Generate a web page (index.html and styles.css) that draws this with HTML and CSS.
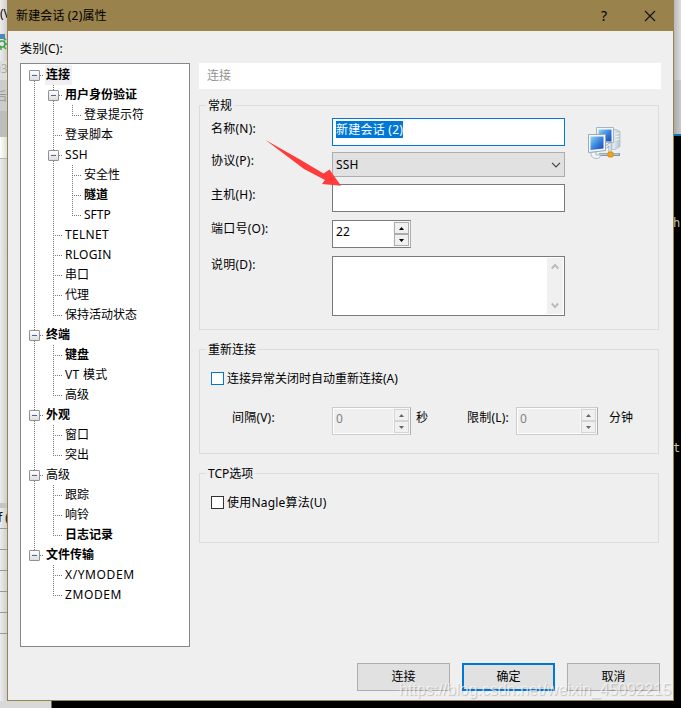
FILE: index.html
```html
<!DOCTYPE html>
<html lang="zh-CN">
<head>
<meta charset="utf-8">
<title>新建会话 (2)属性</title>
<link rel="stylesheet" href="styles.css">
</head>
<body>
<div class="desktop">
  <div class="behind-left">
    <div class="bl-menu">(V</div>
    <div class="bl-tool"><svg width="7" height="18" viewBox="0 0 7 18"><path d="M0 0h5v5H0z" fill="#4f86b8"/><circle cx="2" cy="10" r="3" fill="none" stroke="#3fa34d" stroke-width="1.6"/><path d="M4 6l2-1M5 10h2M4 13l2 2M1 13v3" stroke="#3fa34d" stroke-width="1.5"/></svg></div>
    <div class="bl-addr">03</div>
    <div class="bl-tab">后</div>
    <div class="bl-bar"></div>
    <div class="bl-list"></div>
    <div class="bl-pane"></div>
    <div class="bl-split"></div>
    <div class="bl-head">f (</div>
    <div class="bl-row"></div><div class="bl-row"></div><div class="bl-row"></div><div class="bl-row"></div><div class="bl-row"></div><div class="bl-row"></div>
  </div>

  <main class="dialog">
    <header class="titlebar">
      <h1>新建会话 (2)属性</h1>
      <span class="help">?</span>
      <svg class="close" width="12" height="12" viewBox="0 0 12 12"><path d="M1 1l10 10M11 1L1 11" stroke="#111" stroke-width="1.1" fill="none"/></svg>
    </header>
    <div class="content">
      <div class="category">
        <div class="category-label">类别(C):</div>
        <div class="tree">
          <div class="row"><i class="box first"></i><b class="sel">连接</b></div>
          <div class="row"><i class="v"></i><i class="box"></i><b>用户身份验证</b></div>
          <div class="row"><i class="v"></i><i class="v"></i><i class="l"></i><span>登录提示符</span></div>
          <div class="row"><i class="v"></i><i class="t"></i><span>登录脚本</span></div>
          <div class="row"><i class="v"></i><i class="box"></i><span class="latin">SSH</span></div>
          <div class="row"><i class="v"></i><i class="v"></i><i class="t"></i><span>安全性</span></div>
          <div class="row"><i class="v"></i><i class="v"></i><i class="t"></i><b>隧道</b></div>
          <div class="row"><i class="v"></i><i class="v"></i><i class="l"></i><span>SFTP</span></div>
          <div class="row"><i class="v"></i><i class="t"></i><span class="latin">TELNET</span></div>
          <div class="row"><i class="v"></i><i class="t"></i><span class="latin">RLOGIN</span></div>
          <div class="row"><i class="v"></i><i class="t"></i><span>串口</span></div>
          <div class="row"><i class="v"></i><i class="t"></i><span>代理</span></div>
          <div class="row"><i class="v"></i><i class="l"></i><span>保持活动状态</span></div>
          <div class="row"><i class="box"></i><b>终端</b></div>
          <div class="row"><i class="v"></i><i class="t"></i><b>键盘</b></div>
          <div class="row"><i class="v"></i><i class="t"></i><span class="latin">VT 模式</span></div>
          <div class="row"><i class="v"></i><i class="l"></i><span>高级</span></div>
          <div class="row"><i class="box"></i><b>外观</b></div>
          <div class="row"><i class="v"></i><i class="t"></i><span>窗口</span></div>
          <div class="row"><i class="v"></i><i class="l"></i><span>突出</span></div>
          <div class="row"><i class="box"></i><span>高级</span></div>
          <div class="row"><i class="v"></i><i class="t"></i><span>跟踪</span></div>
          <div class="row"><i class="v"></i><i class="t"></i><span>响铃</span></div>
          <div class="row"><i class="v"></i><i class="l"></i><b>日志记录</b></div>
          <div class="row"><i class="box last"></i><b>文件传输</b></div>
          <div class="row"><i></i><i class="t"></i><span class="modem">X/YMODEM</span></div>
          <div class="row"><i></i><i class="l"></i><span class="modem">ZMODEM</span></div>
        </div>
      </div>

      <div class="settings">
        <div class="banner">连接</div>

        <section class="group general">
          <h2>常规</h2>
          <div class="general-body">
            <div class="form">
              <label>名称(N):</label><div class="input focus"><mark>新建会话 (2)</mark></div>
              <label>协议(P):</label><div class="combo"><span>SSH</span><svg width="10" height="6" viewBox="0 0 10 6"><path d="M1 .8l4 4 4-4" fill="none" stroke="#444" stroke-width="1.2"/></svg></div>
              <label>主机(H):</label><div class="input"></div>
              <label>端口号(O):</label>
              <div class="spin"><span class="num">22</span><span class="arrows"><span><svg width="5" height="3" viewBox="0 0 5 3"><path d="M0 3L2.5 0 5 3z"/></svg></span><span><svg width="5" height="3" viewBox="0 0 5 3"><path d="M0 0l2.5 3L5 0z"/></svg></span></span></div>
              <label>说明(D):</label>
              <div class="textarea"><div class="scroll"><svg width="8" height="7" viewBox="0 0 8 7"><path d="M.7 5.5L4 2l3.3 3.5" fill="none" stroke="#bcbcbc" stroke-width="2"/></svg><svg width="8" height="7" viewBox="0 0 8 7"><path d="M.7 1.5L4 5l3.3-3.5" fill="none" stroke="#bcbcbc" stroke-width="2"/></svg></div></div>
            </div>
            <svg class="net-icon" width="34" height="34" viewBox="0 0 34 34">
              <defs>
                <linearGradient id="scr" x1="0" y1="0" x2="1" y2="1"><stop offset="0" stop-color="#8fd8f5"/><stop offset=".5" stop-color="#3d86df"/><stop offset="1" stop-color="#1746b8"/></linearGradient>
                <linearGradient id="tower" x1="0" y1="0" x2="1" y2="0"><stop offset="0" stop-color="#eef3f7"/><stop offset="1" stop-color="#b4c4d0"/></linearGradient>
              </defs>
              <path d="M25 4l4-.5 4 2v15l-5 3h-3z" fill="url(#tower)" stroke="#a9bac8" stroke-width=".7"/>
              <path d="M28.500 8l4-1M28.500 11l4-1M28.500 14l4-1" stroke="#fff" stroke-width=".8"/>
              <path d="M9.500 1.500h17v15h-17z" fill="#f3f7fa" stroke="#a3b4c2"/>
              <path d="M11.500 3.500h13v12h-13z" fill="url(#scr)"/>
              <path d="M19 21l4-3v10" fill="none" stroke="#96a9b8" stroke-width="3"/>
              <path d="M19 21l4-3v10" fill="none" stroke="#eef3f7" stroke-width="1.300"/>
              <path d="M12 28.500h21" stroke="#8197a8" stroke-width="3"/>
              <path d="M12 28.200h20" stroke="#d3dde5" stroke-width="1"/>
              <path d="M4 26h5v3h5c-1 3-3 3.500-5 3.500s-5-2-5-4z" fill="#f3f6f8" stroke="#a9bac8"/>
              <path d="M1.500 8.500h17v16l-17 2z" fill="#f5f9fb" stroke="#9aacbb"/>
              <path d="M3.500 10.500h13v12l-13 1.500z" fill="url(#scr)"/>
              <rect x="21" y="26" width="5" height="5" rx="1" fill="#f7a70c" stroke="#cf7d00" stroke-width=".7"/>
            </svg>
          </div>
        </section>

        <section class="group reconnect">
          <h2>重新连接</h2>
          <div class="check"><span class="cb hot"></span>连接异常关闭时自动重新连接(A)</div>
          <div class="limits">
            <label class="l-int">间隔(V):</label>
            <div class="spin off"><span class="num">0</span><span class="arrows"><span><svg width="5" height="3" viewBox="0 0 5 3"><path d="M0 3L2.5 0 5 3z"/></svg></span><span><svg width="5" height="3" viewBox="0 0 5 3"><path d="M0 0l2.5 3L5 0z"/></svg></span></span></div>
            <span class="u-sec">秒</span>
            <label class="l-lim">限制(L):</label>
            <div class="spin off wide"><span class="num">0</span><span class="arrows"><span><svg width="5" height="3" viewBox="0 0 5 3"><path d="M0 3L2.5 0 5 3z"/></svg></span><span><svg width="5" height="3" viewBox="0 0 5 3"><path d="M0 0l2.5 3L5 0z"/></svg></span></span></div>
            <span>分钟</span>
          </div>
        </section>

        <section class="group tcp">
          <h2>TCP选项</h2>
          <div class="check nagle"><span class="cb"></span>使用Nagle算法(U)</div>
        </section>
      </div>
    </div>
    <footer class="buttons">
      <button>连接</button><button class="default">确定</button><button>取消</button>
    </footer>
  </main>

  <div class="behind-right">
    <div class="br-top"></div><div class="br-bar"></div><div class="br-line"></div>
    <div class="br-term"><span>h</span><span>t</span></div>
  </div>
  <div class="behind-bottom"></div>
  <svg class="arrow" width="80" height="50" viewBox="0 0 80 50"><path d="M.5 0L35 19.500 58.500 33.500 64.500 29.500 76 45.700 57 44 60 40 39 29z" fill="#ff3b3b"/></svg>
  <div class="watermark">https://blog.csdn.net/weixin_45092215</div>
</div>
</body>
</html>
```
FILE: styles.css
```css
* { box-sizing: border-box; }
body { margin: 0; font: 12px/16px "Noto Sans", "Noto Sans CJK SC", sans-serif; color: #000; overflow: hidden; }
h1, h2 { margin: 0; font: inherit; }
svg { display: block; flex: none; }

.desktop { position: relative; width: 681px; height: 708px; overflow: hidden; display: grid; grid-template-columns: 7px 667px 7px; grid-template-rows: 701px 7px; }

/* strips of the windows behind the dialog */
.behind-left { background: linear-gradient(90deg, #ececec, #cfcfcf); overflow: hidden; white-space: nowrap; }
.behind-left > div { overflow: hidden; }
.bl-menu { height: 33px; padding-top: 6px; }
.bl-tool { height: 28px; padding-top: 1px; }
.bl-addr { height: 19px; color: #aaa; background: #ddd; text-indent: -6px; }
.bl-tab { height: 31px; padding-top: 9px; color: #999; background: #ccc; text-indent: -5px; }
.bl-bar { height: 26px; background: #bdbdbd; }
.bl-list { height: 22px; background: linear-gradient(90deg, #fff, #ddd); border-bottom: 1px solid #b5b5b5; }
.bl-pane { height: 344px; }
.bl-split { height: 5px; background: #c4c4c4; }
.bl-head { height: 21px; padding-top: 2px; border-bottom: 1px solid #999; text-indent: -2px; }
.bl-row { height: 21px; border-bottom: 1px solid #999; }
.bl-row:last-child { border: 0; }
.behind-right { display: flex; flex-direction: column; overflow: hidden; }
.br-top { height: 80px; background: linear-gradient(90deg, #b8b8b8, #dedede); }
.br-bar { height: 54px; background: linear-gradient(90deg, #a9a9a9, #c8c8c8); }
.br-line { height: 2px; background: #0878b8; }
.br-term { flex: 1; background: #000; color: #c8c0a0; font: 12px/16px "DejaVu Sans Mono", monospace; padding-top: 79px; }
.br-term span { display: block; height: 225px; text-indent: -1px; }
.behind-bottom { grid-column: 1 / 4; background: linear-gradient(90deg, #d8d8d8 51px, #000 52px); }

.dialog { background: #efefef; border: 1px solid #99824c; border-top: 0; height: 701px; display: flex; flex-direction: column; }
.titlebar { height: 31px; flex: none; background: #99824c; display: flex; align-items: center; padding-left: 8px; }
.titlebar h1 { flex: 1; letter-spacing: .15px; }
.help { font-size: 14px; width: 8px; margin-right: 35px; }
.close { margin-right: 17px; }

.content { display: flex; padding: 10px 12px 0; height: 616px; flex: none; }
.category { width: 170px; margin-right: 9px; flex: none; }
.category-label { height: 22px; letter-spacing: .15px; }
.tree { height: 584px; border: 1px solid #828790; background: #fff; padding: 1px 0 0 4px; }

.row { display: flex; height: 20px; }
.row b, .row span { margin-left: 1px; padding: 0 2px 0 1px; line-height: 20px; white-space: nowrap; }
.row .sel { background: #f0f0f0; }
.row .latin { letter-spacing: .3px; }
.row .modem { letter-spacing: .6px; }
.row i {
  --dots-v: repeating-linear-gradient(180deg, #777 0 1px, transparent 1px 2px);
  --dots-h: repeating-linear-gradient(90deg, #777 0 1px, transparent 1px 2px);
  width: 19px;
  height: 20px;
  flex: none;
  background-repeat: no-repeat;
  display: flex;
  align-items: center;
  justify-content: center;
}
.row .v { background-image: var(--dots-v); background-size: 1px 20px; background-position: 9px 0; }
.row .t, .row .box { background-image: var(--dots-v), var(--dots-h); background-size: 1px 20px, 9px 1px; background-position: 9px 0, 9px 10px; }
.row .l { background-image: var(--dots-v), var(--dots-h); background-size: 1px 11px, 9px 1px; background-position: 9px 0, 9px 10px; }
.row .first { background-size: 1px 10px, 9px 1px; background-position: 9px 10px, 9px 10px; }
.row .last { background-size: 1px 10px, 9px 1px; }
.box::before { content: ""; width: 9px; height: 9px; margin-top: 1px; border: 1px solid #919191; border-radius: 1px; background: linear-gradient(#4b63a7, #4b63a7) center / 5px 1px no-repeat, linear-gradient(#fff, #ddd); }

.settings { width: 462px; flex: none; padding-top: 22px; }
.banner { height: 26px; background: #fff; color: #929292; padding: 5px 8px; }
.group { width: 460px; border: 1px solid #dcdcdc; }
.group h2 { width: fit-content; height: 16px; margin: -8px 0 0 6px; padding: 0 2px; background: #efefef; }
.general { height: 225px; margin-top: 16px; }
.reconnect { height: 105px; margin-top: 19px; }
.tcp { height: 70px; margin-top: 19px; }
.general-body { display: flex; padding: 4px 0 0 11px; }
.form { display: grid; grid-template-columns: 121px 233px; grid-template-rows: 34px 32px 36px 36px 60px; }
.form label { padding-top: 3px; letter-spacing: .25px; }
.form label:nth-of-type(2) { padding-top: 1px; }
.form label:nth-of-type(4), .form label:nth-of-type(5) { padding-top: 1px; }
.input { height: 28px; background: #fff; border: 1px solid #7a7a7a; padding: 3px; }
.focus { border-color: #0078d7; }
mark { display: block; width: fit-content; height: 17px; line-height: 17px; background: #0078d7; color: #fff; margin-top: -1px; white-space: nowrap; letter-spacing: .25px; }
.combo { height: 25px; background: #e1e1e1; border: 1px solid #adadad; display: flex; align-items: center; justify-content: space-between; padding: 0 3px; letter-spacing: .2px; }
.spin { width: 79px; height: 28px; background: #fff; border: 1px solid #7a7a7a; border-right-color: #adadb2; display: flex; justify-content: space-between; }
.num { padding: 3px; letter-spacing: .2px; }
.arrows { width: 17px; padding: 1px; background: #f8f8f8; display: flex; flex-direction: column; }
.arrows > span { flex: 1; border: 1px solid #acacac; background: #f0f0f0; display: flex; align-items: center; justify-content: center; }
.off { background: #efefef; border-color: #ccc #adadb2 #ccc #ccc; color: #838383; box-shadow: inset 0 0 0 1px #fff; }
.off .arrows > span { border-color: #d4d4d4; }
.off path { fill: #666; }
.wide { width: 82px; }
.textarea { height: 60px; background: #fff; border: 1px solid #7a7a7a; padding: 1px; display: flex; justify-content: flex-end; }
.scroll { width: 16px; background: #f0f0f0; display: flex; flex-direction: column; align-items: center; justify-content: space-between; padding: 5px 0; }
.net-icon { margin: 8px 0 0 22px; }

.check { display: flex; align-items: center; height: 16px; margin: 13px 0 0 11px; white-space: nowrap; }
.nagle { letter-spacing: .2px; }
.cb { width: 13px; height: 13px; border: 1px solid #333; background: #fff; margin: 0 3px 1px 0; }
.cb.hot { border-color: #0078d7; }
.limits { display: flex; margin: 20px 0 0 32px; white-space: nowrap; }
.limits label, .limits > span { padding-top: 3px; }
.limits label { letter-spacing: .2px; }
.l-int { width: 100px; }
.u-sec { width: 51px; margin-left: 5px; }
.l-lim { width: 49px; }
.limits > span:last-child { margin-left: 11px; }

.buttons { display: flex; gap: 12px; justify-content: flex-end; padding: 16px 13px 0 0; }
button { width: 93px; height: 28px; padding: 0; font: inherit; color: #000; background: #e1e1e1; border: 1px solid #adadad; border-radius: 0; }
.default { border: 2px solid #0078d7; }

.arrow { position: absolute; left: 265px; top: 140px; }
.watermark { position: absolute; left: 399px; top: 680px; font: 16px/20px "Liberation Sans", sans-serif; color: rgba(255, 255, 255, .65); text-shadow: 1px 1px 1px rgba(0, 0, 0, .2); white-space: nowrap; }
```
